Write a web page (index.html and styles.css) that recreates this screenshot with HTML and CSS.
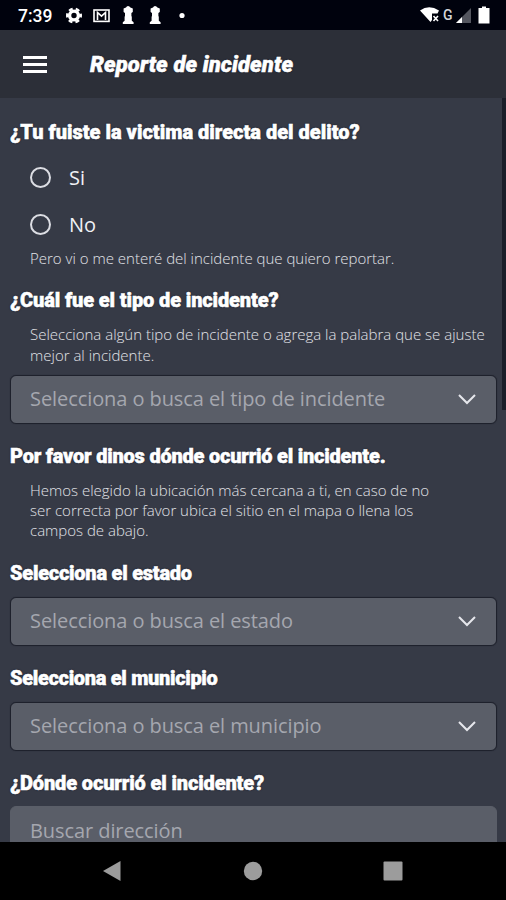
FILE: index.html
```
<!DOCTYPE html>
<html lang="es">
<head>
  <meta charset="UTF-8">
  <meta name="viewport" content="width=device-width, initial-scale=1.0">
  <title>Reporte de incidente</title>
  <link rel="stylesheet" href="styles.css">
</head>
<body>
  <div class="screen">
    <div class="status-bar">
      <span class="clock">7:39</span>
      <svg class="status-left" width="124" height="30" viewBox="0 0 124 30">
        <g fill="none" stroke="#fff">
          <circle cx="12" cy="15.5" r="4.4" stroke-width="3.4"/>
          <circle cx="12" cy="15.5" r="6.8" stroke-width="2.4" stroke-dasharray="4 3.12" stroke-dashoffset="2"/>
          <rect x="32" y="10" width="15" height="11.4" stroke-width="1.6"/>
          <path d="M35.5 20V12.5l4 3.6 4-3.6V20" stroke-width="1.6"/>
        </g>
        <g fill="#fff">
          <path id="pawn" d="M66 6a3 3 0 0 1 2.4 1.6l2.4 1v3.4l-1.4 1v3l.4.8v4l1.8 1.4V24H60.800v-1.800l1.800-1.400v-4l.4-.8v-3l-1.400-1V8.600l2.400-1A3 3 0 0 1 66 6z"/>
          <use href="#pawn" x="27"/>
          <circle cx="120" cy="15.500" r="2.600"/>
        </g>
      </svg>
      <svg class="status-right" width="76" height="30" viewBox="0 0 76 30">
        <path d="M0 10.500Q9 4 19 10.500l-1.500 3H12V20l-1.500 2z" fill="#fff"/>
        <path d="M13.500 16l4.500 5M18 16l-4.500 5" stroke="#fff" stroke-width="1.600"/>
        <path d="M51 8v15H36z" fill="#54565f"/>
        <path d="M42 17v6h-6z" fill="#fff"/>
        <path d="M62 6.500h4V8h3.500v15.500h-11V8H62z" fill="#fff"/>
      </svg>
      <span class="network">G</span>
    </div>

    <div class="header">
      <div class="menu-icon">
        <span></span>
        <span></span>
        <span></span>
      </div>
      <h1>Reporte de incidente</h1>
    </div>

    <div class="content">
      <h2 class="q-victim">¿Tu fuiste la victima directa del delito?</h2>
      <div class="options">
        <label class="option"><span class="radio"></span>Si</label>
        <label class="option"><span class="radio"></span>No</label>
      </div>
      <p class="hint">Pero vi o me enteré del incidente que quiero reportar.</p>

      <h2 class="q-type">¿Cuál fue el tipo de incidente?</h2>
      <p class="hint hint-type">Selecciona algún tipo de incidente o agrega la palabra que se ajuste<br>mejor al incidente.</p>
      <div class="field field-type">
        <span class="placeholder">Selecciona o busca el tipo de incidente</span>
        <svg width="18" height="12" viewBox="0 0 18 12"><path d="M1 2l8 8 8-8"/></svg>
      </div>

      <h2 class="q-where">Por favor dinos dónde ocurrió el incidente.</h2>
      <p class="hint hint-where">Hemos elegido la ubicación más cercana a ti, en caso de no<br>ser correcta por favor ubica el sitio en el mapa o llena los<br>campos de abajo.</p>

      <h2 class="q-state">Selecciona el estado</h2>
      <div class="field">
        <span class="placeholder">Selecciona o busca el estado</span>
        <svg width="18" height="12" viewBox="0 0 18 12"><path d="M1 2l8 8 8-8"/></svg>
      </div>

      <h2 class="q-city">Selecciona el municipio</h2>
      <div class="field">
        <span class="placeholder">Selecciona o busca el municipio</span>
        <svg width="18" height="12" viewBox="0 0 18 12"><path d="M1 2l8 8 8-8"/></svg>
      </div>

      <h2 class="q-address">¿Dónde ocurrió el incidente?</h2>
      <div class="field field-search">
        <span class="placeholder">Buscar dirección</span>
      </div>
      <div class="scrollbar"></div>
    </div>

    <div class="nav-bar">
      <svg width="20" height="22" viewBox="0 0 20 22"><path d="M18.500 1v20L1 11z"/></svg>
      <svg width="20" height="20" viewBox="0 0 20 20"><circle cx="10" cy="10" r="9.200"/></svg>
      <svg width="20" height="20" viewBox="0 0 20 20"><rect x=".5" y=".5" width="19" height="19" rx="1"/></svg>
    </div>
  </div>
</body>
</html>
```
FILE: styles.css
```
body {
  margin: 0;
  background: #000;
  color: #fff;
  font-family: "Open Sans", "Noto Sans", sans-serif;
}

.screen {
  display: flex;
  flex-direction: column;
  width: 506px;
  height: 900px;
  overflow: hidden;
}

.status-bar {
  display: flex;
  align-items: center;
  position: relative;
  height: 30px;
  padding: 0 14px 0 18px;
  background: #00020d;
}

.clock {
  width: 44px;
  font: 500 17.5px/30px Roboto, sans-serif;
  padding-top: 2px;
  box-sizing: border-box;
}

.status-right {
  margin-left: auto;
  margin-right: -4px;
}

.network {
  position: absolute;
  left: 443px;
  top: 0;
  color: #d5d6da;
  font: 500 14px/30px Roboto, sans-serif;
}

.header {
  display: flex;
  align-items: center;
  box-sizing: border-box;
  height: 68px;
  padding: 1px 0 0 23px;
  background: #2c2f38;
}

.menu-icon {
  display: flex;
  flex-direction: column;
  gap: 4px;
  width: 24px;
  margin-right: 43px;
}

.menu-icon span {
  height: 3px;
  background: #fff;
}

h1,
h2 {
  margin: 0;
  font-family: Roboto, sans-serif;
  font-weight: 900;
  white-space: nowrap;
  text-shadow: 0 0 2px #141828;
  -webkit-text-stroke: 0.5px #fff;
}

h1 {
  font-size: 22px;
  font-style: italic;
  line-height: 28px;
  letter-spacing: 0.1px;
}

h2 {
  font-size: 20px;
  line-height: 24px;
}

.content {
  position: relative;
  box-sizing: border-box;
  height: 744px;
  padding: 22px 9px 0 10px;
  overflow: hidden;
  background: #363a46;
}

.options {
  margin-top: 10px;
}

.option {
  display: flex;
  align-items: center;
  height: 47px;
  padding-left: 20px;
  color: #f0f1f5;
  font-size: 20px;
}

.radio {
  box-sizing: border-box;
  width: 21px;
  height: 21px;
  margin-right: 18px;
  border: 2px solid #dcdde3;
  border-radius: 50%;
}

.hint {
  margin: 0 0 0 20px;
  color: #e2e3e8;
  font-size: 15px;
  font-weight: 300;
  line-height: 20.3px;
  white-space: nowrap;
}

.q-type,
.q-where,
.q-state,
.q-city,
.q-address {
  margin-top: 20px;
}

.q-type {
  letter-spacing: -0.13px;
}

.q-where {
  letter-spacing: -0.22px;
}

.q-state {
  letter-spacing: -0.25px;
}

.q-city {
  letter-spacing: -0.32px;
}

.q-address {
  letter-spacing: -0.14px;
}

.hint-type,
.hint-where {
  margin-top: 12px;
}

.field {
  display: flex;
  align-items: center;
  justify-content: space-between;
  box-sizing: border-box;
  height: 49px;
  margin-top: 12px;
  padding: 0 20px 0 19px;
  border: 1px solid #1e212c;
  border-radius: 6px;
  background: #5a5e68;
  box-shadow: 0 0 1px #1e212c;
}

.field-type {
  margin-top: 10px;
}

.placeholder {
  color: #a5a7af;
  font-size: 20px;
  line-height: 28px;
  letter-spacing: -0.08px;
  white-space: nowrap;
}

.field svg {
  fill: none;
  stroke: #e6e7ec;
  stroke-width: 2;
}

.field-search {
  height: 51px;
  margin-top: 11px;
  border-color: #5a5e68;
  box-shadow: none;
}

.scrollbar {
  position: absolute;
  top: 0;
  right: 0;
  width: 4px;
  height: 312px;
  background: #1b1e29;
}

.nav-bar {
  display: flex;
  align-items: center;
  justify-content: space-between;
  box-sizing: border-box;
  height: 58px;
  padding: 0 103px 0 102px;
  background: #000;
}

.nav-bar svg {
  fill: #9c9c9c;
}
```
